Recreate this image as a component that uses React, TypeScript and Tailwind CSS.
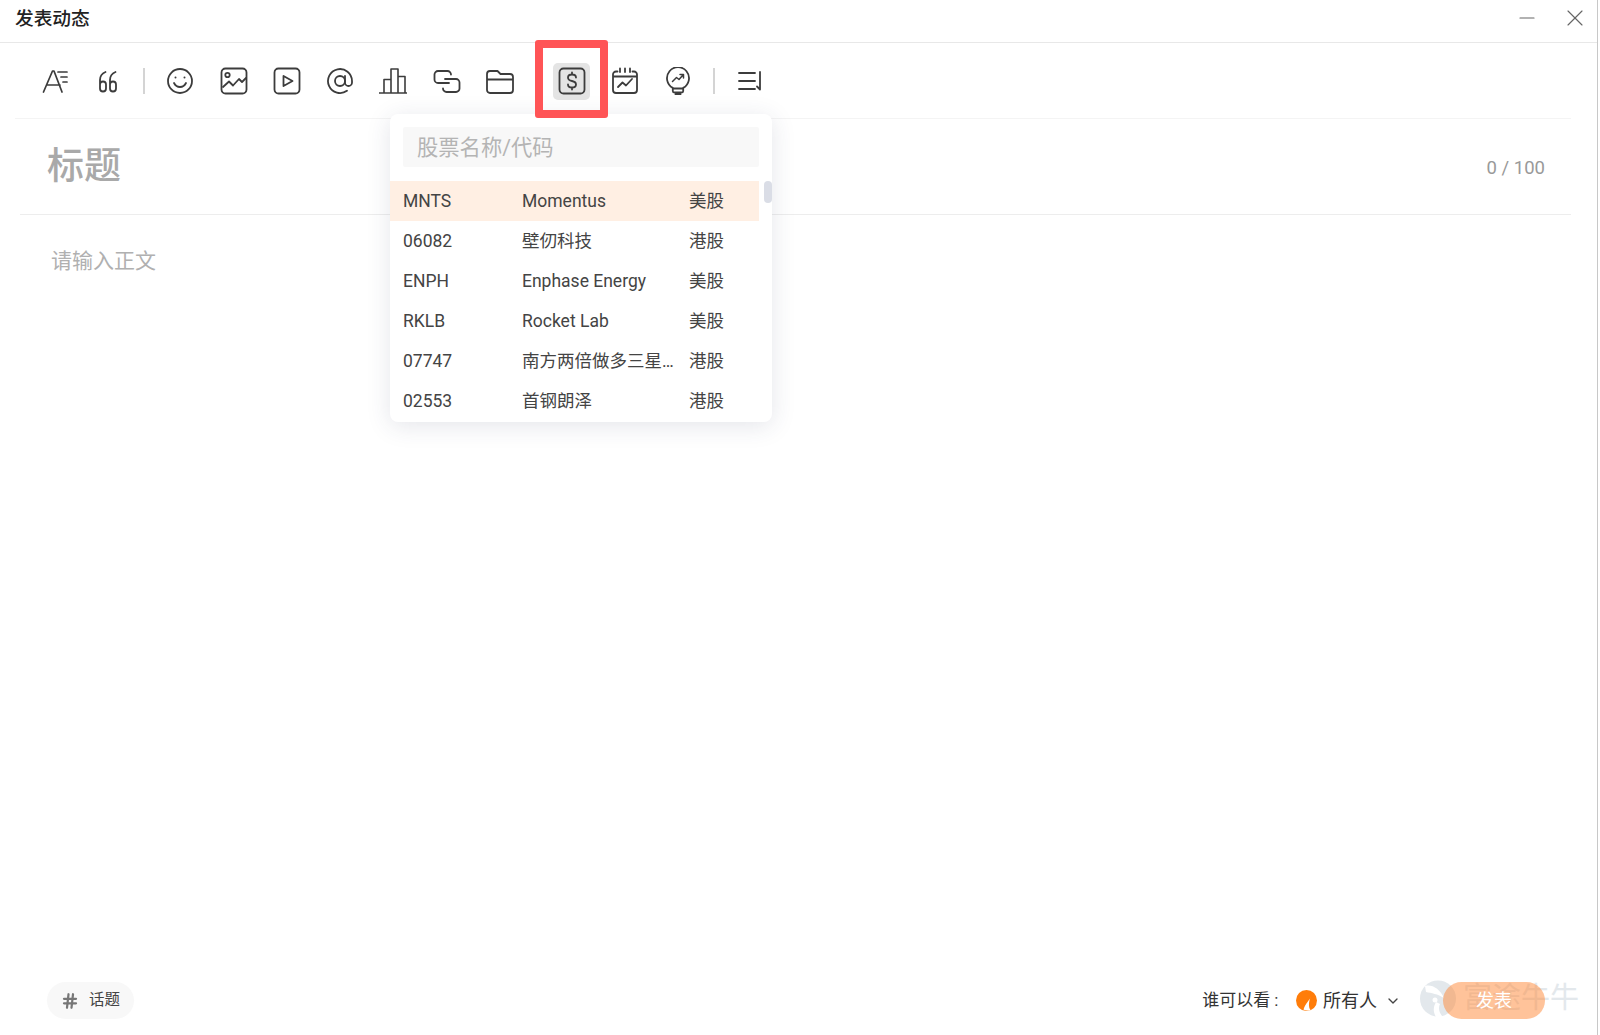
import type { ReactNode } from 'react';
import { Minus, X, Hash, ChevronDown } from 'lucide-react';

interface Stock {
  code: string;
  name: string;
  market: string;
}

const stocks: Stock[] = [
  { code: 'MNTS', name: 'Momentus', market: '美股' },
  { code: '06082', name: '壁仞科技', market: '港股' },
  { code: 'ENPH', name: 'Enphase Energy', market: '美股' },
  { code: 'RKLB', name: 'Rocket Lab', market: '美股' },
  { code: '07747', name: '南方两倍做多三星电子', market: '港股' },
  { code: '02553', name: '首钢朗泽', market: '港股' },
];

const Icon = ({ children, active, className }: { children: ReactNode; active?: boolean; className?: string }) => (
  <div
    className={`flex h-[37px] w-[37px] shrink-0 items-center justify-center rounded-[5px] ${active ? 'bg-[#e4e4e4]' : ''} ${className ?? ''}`}
  >
    <svg
      width="28"
      height="28"
      viewBox="0 0 28 28"
      fill="none"
      stroke="#3c3c3c"
      strokeWidth="1.8"
      strokeLinecap="round"
      strokeLinejoin="round"
    >
      {children}
    </svg>
  </div>
);

const Divider = () => <div className="mx-[16.500px] h-[26px] w-[2px] shrink-0 bg-[#d4d4d4]" />;

const Toolbar = () => (
  <div className="ml-[15px] mr-[26px] flex h-[76px] shrink-0 items-center gap-[16.300px] border-b border-[#f4f4f4] pl-[21px] pt-[1px]">
    <Icon>
      <path d="M2.500 25L11.500 4h1.500l8 21M6 18h13" strokeWidth="1.700" />
      <path d="M17 5h9M20 10h6M22 15h4" strokeWidth="1.700" />
    </Icon>
    <div className="flex items-center">
      <Icon>
        <path d="M11.500 5C8 6.500 6 9.500 6 13v8.500a3 3 0 0 0 6 0v-4a3 3 0 0 0-6 0" />
        <path d="M21.500 5C18 6.500 16 9.500 16 13v8.500a3 3 0 0 0 6 0v-4a3 3 0 0 0-6 0" />
      </Icon>
      <Divider />
      <Icon>
        <circle cx="14" cy="14" r="12" />
        <path d="M8 16c1.500 3 3.500 4 6 4s4.500-1 6-4" />
        <circle cx="9.500" cy="10.500" r="1" fill="#3c3c3c" stroke="none" />
        <circle cx="18.500" cy="10.500" r="1" fill="#3c3c3c" stroke="none" />
      </Icon>
    </div>
    <Icon className="ml-[0.500px]">
      <rect x="1.500" y="1.500" width="25" height="25" rx="4" />
      <circle cx="7.500" cy="8" r="2.200" />
      <path d="M3 20l6-5.500 4 4 6-6.500 3 3 4-4" />
    </Icon>
    <Icon>
      <rect x="1.500" y="1.500" width="25" height="25" rx="4" />
      <path d="M10.500 9l9 5-9 5z" />
    </Icon>
    <Icon>
      <circle cx="14" cy="14" r="5" />
      <path d="M19 9v6.500a3.500 3.500 0 0 0 7 0V14a12 12 0 1 0-5 9.800" />
    </Icon>
    <Icon>
      <path d="M0.500 26h27M5 26V12.500h7M12 26V2h7v24M19 9.500h7V26" strokeWidth="1.600" />
    </Icon>
    <Icon>
      <path d="M18 7.500A3.500 3.500 0 0 0 14.500 4H5a3.500 3.500 0 0 0-3.500 3.500v5A3.500 3.500 0 0 0 5 16h11" />
      <path d="M12 12h11a3.500 3.500 0 0 1 3.500 3.500v6A3.500 3.500 0 0 1 23 25H13.500a3.500 3.500 0 0 1-3.500-3.500" />
    </Icon>
    <div className="mr-[18.400px]">
      <Icon>
        <path d="M1 7a3 3 0 0 1 3-3h7.500l3 3H24a3 3 0 0 1 3 3v13a3 3 0 0 1-3 3H4a3 3 0 0 1-3-3zM1 12.500h26" />
      </Icon>
    </div>
    <Icon active>
      <rect x="1.500" y="1.500" width="25" height="25" rx="4" />
      <path d="M18 10.500c0-2-2-3-4-3s-4 1-4 3 1.500 3 4 3.500 4 1.500 4 3.500-2 3-4 3-4-1-4-3M14 5.500v2M14 20.500v2" />
    </Icon>
    <Icon>
      <path d="M6.500 4.500H5a3 3 0 0 0-3 3V23a3 3 0 0 0 3 3h18a3 3 0 0 0 3-3V7.500a3 3 0 0 0-3-3h-1.500M2 9.500h24" />
      <path d="M9 1.500v3.500M14 1.500v3.500M19 1.500v3.500M7 20l4.500-4.500 3.500 3 6-6.500" />
    </Icon>
    <div className="flex items-center">
      <Icon>
        <path d="M8.800 20.900A11 11 0 1 1 19.200 20.900V24a1.500 1.500 0 0 1-1.500 1.500h-7.400A1.500 1.500 0 0 1 8.800 24zM9 21.500h10M11.500 27.500h5" />
        <path d="M8.500 14.500l4-4 2.500 2 4-4.500M16 7.500h3.500V11" strokeWidth="1.500" />
      </Icon>
      <Divider />
      <Icon>
        <path d="M3 6h16M3 14h16M3 22h16" />
        <path d="M24 5v17.500l-3-3" />
      </Icon>
    </div>
  </div>
);

const StockPicker = () => (
  <div className="absolute left-[390px] top-[114px] flex h-[308px] w-[382px] flex-col overflow-hidden rounded-[8px] bg-white shadow-[0_4px_24px_rgba(45,55,90,0.13)]">
    <div className="mx-[13px] mt-[13px] flex h-[40px] shrink-0 items-center rounded-[2px] bg-[#f8f8f8] pl-[14px] pt-[1px] text-[21.300px] text-[#b4b4b4]">
      股票名称/代码
    </div>
    <div className="mt-[14px] w-[369px] shrink-0">
      {stocks.map((s, i) => (
        <div
          key={s.code}
          className={`flex h-[40px] items-center pl-[13px] pt-[1px] text-[17.500px] text-[#444444] ${i === 0 ? 'bg-[#ffefe3]' : ''}`}
        >
          <div className="w-[119px] shrink-0">{s.code}</div>
          <div className="w-[152px] shrink-0 truncate">{s.name}</div>
          <div className="ml-[15px]">{s.market}</div>
        </div>
      ))}
    </div>
    <div className="absolute right-0 top-[67px] h-[22px] w-[8px] rounded-full bg-[#dadde6]" />
  </div>
);

const Watermark = () => (
  <div className="absolute left-[1420px] top-[980px] flex items-center text-[29px] leading-[37px] text-[#e3e8ec]">
    <svg width="36" height="37" viewBox="0 0 36 37" className="mr-[7px]">
      <circle cx="18" cy="18.500" r="18" fill="#e3e8ec" />
      <path d="M5 6C12 4 20 9 24 18 18 14 11 13 6 12z" fill="#ffffff" />
      <path d="M16 37c-3-5-3-10 0-15l4 2c-2 4-1 9 3 13z" fill="#ffffff" />
      <circle cx="15" cy="20" r="2.500" fill="#ffffff" />
    </svg>
    富途牛牛
  </div>
);

const Footer = () => (
  <div className="relative mb-[16px] flex h-[37px] shrink-0 items-center justify-between pl-[47px] pr-[52px]">
    <div className="flex h-[37px] w-[87px] items-center rounded-full bg-[#f8f8f8] pl-[14px] text-[15.500px] text-[#444444]">
      <Hash size={18} strokeWidth={3} className="text-[#777777]" />
      <span className="ml-[10px]">话题</span>
    </div>
    <div className="flex items-center">
      <span className="text-[17px] text-[#333333]">谁可以看 :</span>
      <svg width="21" height="21" viewBox="0 0 21 21" className="ml-[17.500px]">
        <circle cx="10.500" cy="10.500" r="10.500" fill="#ff7d0a" />
        <path d="M14.500 7C14 10 9.500 13 7.500 19.500c2 1 5 1.500 7 .5C12 17 13 11 14.500 7z" fill="#ffffff" />
      </svg>
      <span className="ml-[6px] text-[18px] text-[#333333]">所有人</span>
      <ChevronDown size={16} strokeWidth={2} className="ml-[8px] text-[#444444]" />
      <div className="relative ml-[42px] flex h-[37px] w-[102px] items-center justify-center rounded-full bg-[#ff8736]/50 text-[18px] text-white">
        发表
      </div>
    </div>
  </div>
);

export default function App() {
  return (
    <div className="relative h-[1035px] w-[1600px] overflow-hidden bg-white font-[Roboto,'Noto_Sans_CJK_SC',sans-serif]">
      <div className="flex h-full w-[1598px] flex-col border-r border-[#c8c8c8]">
        <div className="flex h-[43px] shrink-0 items-center justify-between border-b border-[#e8e8e8] pb-[7px] pl-[15px] pr-[8px]">
          <div className="pt-[3px] text-[18.700px] font-medium text-[#222222]">发表动态</div>
          <div className="flex items-center gap-[22px] text-[#666666]">
            <Minus size={24} strokeWidth={1.200} />
            <X size={28} strokeWidth={1} />
          </div>
        </div>
        <Toolbar />
        <div className="ml-[20px] mr-[26px] flex h-[96px] shrink-0 items-center justify-between border-b border-[#ededed] pl-[27px] pr-[26px]">
          <div className="pt-[1px] text-[37px] font-medium text-[#a9a9a9]">标题</div>
          <div className="pt-[4px] text-[18.500px] text-[#999999]">0 / 100</div>
        </div>
        <div className="flex-1 pl-[51px] pt-[31px] text-[21px] text-[#b0b0b0]">请输入正文</div>
        <Watermark />
        <Footer />
      </div>
      <StockPicker />
      <div className="absolute left-[535px] top-[40px] h-[78px] w-[73px] rounded-[3px] border-[8px] border-[#ff5456]" />
    </div>
  );
}
